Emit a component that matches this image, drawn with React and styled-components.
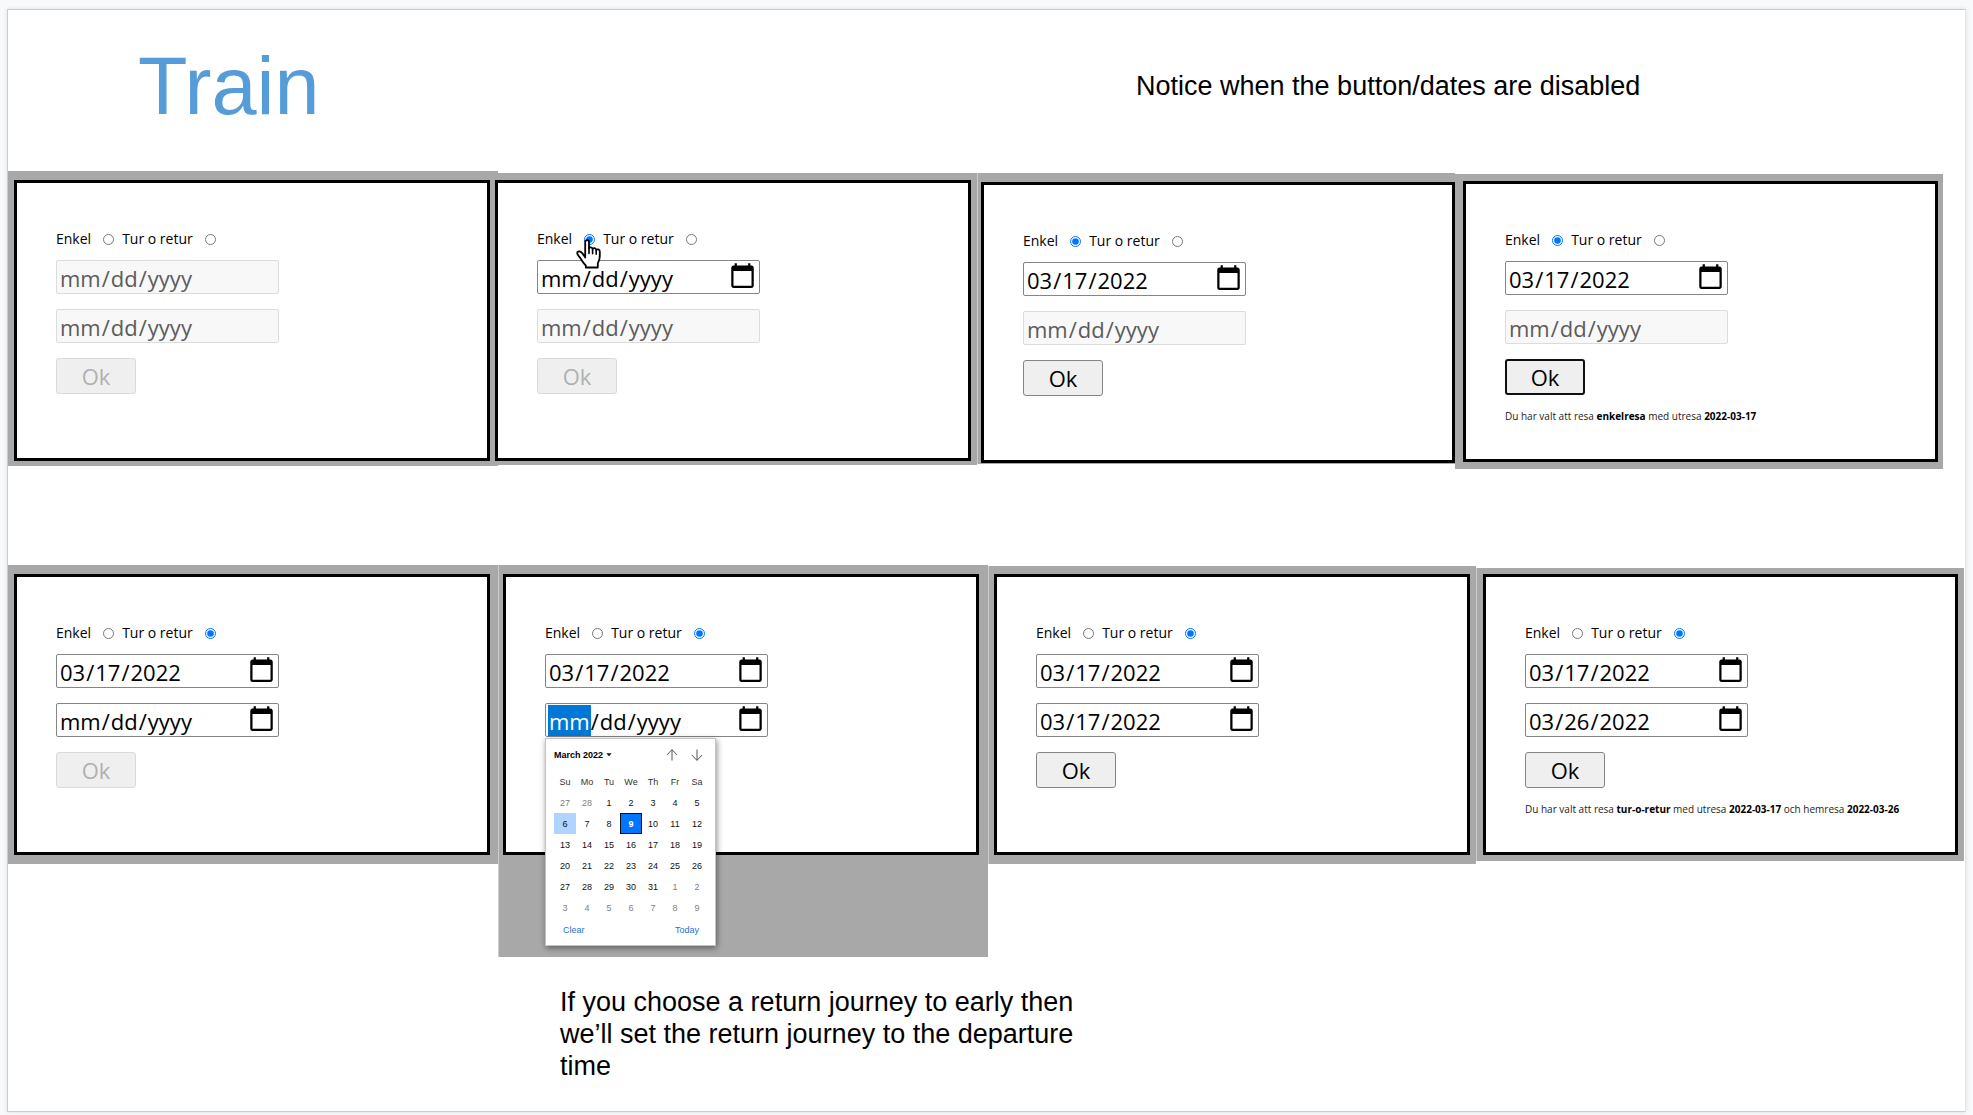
import React, { useId } from "react";
import styled, { createGlobalStyle, css } from "styled-components";

const GlobalStyle = createGlobalStyle`
  *, *::before, *::after { box-sizing: border-box; }
  body {
    margin: 0;
    background: #f8f9fb;
    color: #000;
    font-family: "Liberation Sans", Arial, sans-serif;
  }
`;

const uiFont = `"Open Sans", "Noto Sans", sans-serif`;

const Page = styled.div`
  min-height: 100vh;
  padding: 9px 7px 3px;
  display: flex;
`;

const Slide = styled.main`
  flex: 1;
  min-width: 0;
  background: #fff;
  border: 1px solid #c9ccd0;
  border-right-color: #e4e6e9;
  box-shadow: 0 0 4px rgba(60, 64, 67, 0.15);
`;

const SlideHeader = styled.header`
  display: grid;
  grid-template-columns: 1128fr 829fr;
  align-items: center;
  height: 161px;
  padding-bottom: 10px;
`;

const Title = styled.h1`
  margin: 0;
  padding-left: 130px;
  color: #569cd8;
  font-size: 81px;
  font-weight: 400;
  line-height: 96px;
`;

const Note = styled.p`
  margin: 0;
  font-size: 27px;
  line-height: 32px;
`;

const FootNote = styled(Note)`
  max-width: 540px;
  margin: 29px 0 0 552px;
`;

const ScreenRow = styled.section`
  display: grid;
  grid-template-columns: ${(p) => p.$columns};
  align-items: start;
  height: ${(p) => p.$height};
  padding-right: ${(p) => p.$end || "0"};
`;

const Screen = styled.article`
  margin-top: ${(p) => p.$drop || "0"};
  margin-left: ${(p) => p.$overlap || "0"};
  padding: ${(p) => p.$frame};
  background: #a8a8a8;
  ${(p) => p.$seam && css`border-left: 1px solid #ccc;`}
`;

const Form = styled.form`
  min-height: 281px;
  padding: 47px 39px 0;
  border: 3px solid #000;
  background: #fff;
  font-family: ${uiFont};
`;

const TripType = styled.fieldset`
  display: flex;
  align-items: center;
  margin: 0 0 12px;
  padding: 0;
  border: 0;
  height: 18px;
`;

const TripOption = styled.label`
  position: relative;
  display: flex;
  align-items: center;
  gap: 12px;
  margin-right: 8px;
  font-size: 14px;
  line-height: 18px;
  white-space: nowrap;
`;

const Radio = styled.input`
  width: 11px;
  height: 11px;
  margin: 0;
  accent-color: #0075ff;
`;

const Pointer = styled.svg`
  position: absolute;
  left: 39px;
  top: 9px;
  z-index: 1;
`;

const Field = styled.div`
  position: relative;
  width: 223px;
  margin-bottom: 15px;
`;

const DateInput = styled.input`
  display: block;
  width: 100%;
  height: 34px;
  margin: 0;
  padding: 1px 3px 0 2px;
  border: 1px solid #858585;
  border-radius: 2px;
  background: #fff;
  color: #000;
  font-family: ${uiFont};
  font-size: 22px;
  line-height: 30px;

  &::-webkit-calendar-picker-indicator {
    width: 27px;
    height: 27px;
    padding: 0;
    margin-bottom: 4px;
    background-size: 27px 27px;
  }

  &:disabled {
    border-color: #dcdcdc;
    background: #f8f8f8;
    color: #5c5c5c;
  }

  ${(p) => p.$editing && css`
    &::-webkit-datetime-edit-month-field {
      background: #0078d7;
      color: #fff;
    }
  `}
`;

const OkButton = styled.button`
  display: block;
  width: 80px;
  height: 36px;
  padding: 0;
  border: ${(p) => (p.$focused ? "2px solid #101010" : "1px solid #858585")};
  border-radius: 3px;
  background: #efefef;
  color: #000;
  font-family: ${uiFont};
  font-size: 22px;
  line-height: 32px;

  &:disabled {
    border-color: #dadada;
    color: #b0b0b0;
  }
`;

const Result = styled.output`
  display: block;
  margin-top: 15px;
  font-size: 10px;
  line-height: 12px;
  color: #222;
  white-space: nowrap;

  b { color: #000; }
`;

const Popup = styled.div`
  position: absolute;
  top: 100%;
  left: 0;
  z-index: 2;
  width: 171px;
  margin-top: 1px;
  padding: 6px 8px;
  background: #fff;
  border: 1px solid #c4c4c4;
  box-shadow: 1px 2px 6px rgba(0, 0, 0, 0.45);
  font-family: "Liberation Sans", Arial, sans-serif;
  font-size: 9px;
`;

const PopupBar = styled.div`
  display: flex;
  align-items: center;
  height: 20px;
`;

const PlainButton = styled.button`
  display: flex;
  align-items: center;
  padding: 0;
  border: 0;
  background: none;
  color: ${(p) => p.$color || "#000"};
  font: inherit;
`;

const MonthButton = styled(PlainButton)`
  gap: 3px;
  margin-right: auto;
  font-weight: 700;
`;

const ArrowButton = styled(PlainButton)`
  justify-content: flex-end;
  width: 25px;
  padding-right: 4px;
`;

const Days = styled.table`
  width: 154px;
  margin-top: 6px;
  border-collapse: collapse;
  table-layout: fixed;
  text-align: center;

  th {
    height: 21px;
    padding: 0;
    color: #333;
    font-weight: 400;
  }
`;

const Day = styled.td`
  height: 21px;
  padding: 0;
  color: ${(p) => (p.$outside ? "#808080" : "#111")};
  ${(p) => p.$hover && css`background: #b0d3ff;`}
  ${(p) => p.$today && css`
    background: #0075ff;
    color: #fff;
    font-weight: 700;
    box-shadow: inset 0 0 0 1px #101010;
  `}
`;

const PopupActions = styled.div`
  display: flex;
  justify-content: space-between;
  padding: 3px 8px 0 9px;
  line-height: 18px;
`;

const weekdays = ["Su", "Mo", "Tu", "We", "Th", "Fr", "Sa"];
const cells = Array.from({ length: 42 }, (_, i) => {
  const n = i - 1;
  if (n < 1) return { day: 28 + n, outside: true };
  if (n > 31) return { day: n - 31, outside: true };
  return { day: n, outside: false };
});
const weeks = Array.from({ length: 6 }, (_, w) => cells.slice(w * 7, w * 7 + 7));

function Arrow({ down }) {
  return (
    <svg width="12" height="12" viewBox="0 0 12 12" fill="none" stroke="#555" strokeWidth="1">
      {down ? <path d="M6 0.5V11.5M0.8 6L6 11.3L11.2 6" /> : <path d="M6 11.5V0.5M0.8 6L6 0.7L11.2 6" />}
    </svg>
  );
}

function Calendar() {
  return (
    <Popup>
      <PopupBar>
        <MonthButton type="button">
          March 2022
          <svg width="6" height="4" viewBox="0 0 6 4"><path d="M0.3 0.3H5.7L3 3.3Z" fill="#111" /></svg>
        </MonthButton>
        <ArrowButton type="button" aria-label="Previous month"><Arrow /></ArrowButton>
        <ArrowButton type="button" aria-label="Next month"><Arrow down /></ArrowButton>
      </PopupBar>
      <Days>
        <thead>
          <tr>{weekdays.map((d) => <th key={d} scope="col">{d}</th>)}</tr>
        </thead>
        <tbody>
          {weeks.map((week, w) => (
            <tr key={w}>
              {week.map(({ day, outside }) => (
                <Day
                  key={day}
                  $outside={outside}
                  $hover={!outside && day === 6}
                  $today={!outside && day === 9}
                >
                  {day}
                </Day>
              ))}
            </tr>
          ))}
        </tbody>
      </Days>
      <PopupActions>
        <PlainButton type="button" $color="#1a73d0">Clear</PlainButton>
        <PlainButton type="button" $color="#1a73d0">Today</PlainButton>
      </PopupActions>
    </Popup>
  );
}

function HandPointer() {
  return (
    <Pointer width="26" height="30" viewBox="0 0 26 30" aria-hidden="true">
      <path
        d="M9.2 18.5V3.2C9.2 0.4 13 0.4 13 3.2V9.6C13 7.8 16.4 7.8 16.6 10C17.2 8.5 20 8.8 20.2 11C21 9.8 23.8 10.2 23.8 12.6V17C23.8 21 22.4 22.6 21.8 24.5V28.5H9.8V26.5C7.6 24.5 5.6 20.6 3.6 18.2C1.4 15.6 0.6 13.8 1.8 12.8C3.2 11.6 5.4 13 6.6 14.6L9.2 18.2Z"
        fill="#fff"
        stroke="#000"
        strokeWidth="1.8"
        strokeLinejoin="round"
      />
      <path d="M13 9V14.5M16.6 10V14.8M20.2 11V15.2" stroke="#000" strokeWidth="1.6" strokeLinecap="round" />
    </Pointer>
  );
}

function TrainForm({ trip, out, back, outEnabled, backEnabled, okEnabled, okFocused, pointer, picking, children }) {
  const id = useId();
  return (
    <Form onSubmit={(e) => e.preventDefault()}>
      <TripType>
        <TripOption>
          Enkel
          <Radio type="radio" name={id} defaultChecked={trip === "single"} />
          {pointer && <HandPointer />}
        </TripOption>
        <TripOption>
          Tur o retur
          <Radio type="radio" name={id} defaultChecked={trip === "return"} />
        </TripOption>
      </TripType>
      <Field>
        <DateInput type="date" aria-label="Utresa" defaultValue={out} disabled={!outEnabled} />
      </Field>
      <Field>
        <DateInput type="date" aria-label="Hemresa" defaultValue={back} disabled={!backEnabled} $editing={picking} />
        {picking && <Calendar />}
      </Field>
      {!picking && <OkButton disabled={!okEnabled} $focused={okFocused}>Ok</OkButton>}
      {children && <Result>{children}</Result>}
    </Form>
  );
}

export default function App() {
  return (
    <>
      <GlobalStyle />
      <Page>
        <Slide>
          <SlideHeader>
            <Title>Train</Title>
            <Note>Notice when the button/dates are disabled</Note>
          </SlideHeader>

          <ScreenRow $columns="490fr 479fr 478fr 488fr" $height="394px" $end="22px">
            <Screen $frame="9px 8px 5px 6px">
              <TrainForm />
            </Screen>
            <Screen $drop="2px" $overlap="-8px" $frame="7px 6px 4px 5px">
              <TrainForm trip="single" outEnabled pointer />
            </Screen>
            <Screen $drop="2px" $seam $frame="9px 0 1px 3px">
              <TrainForm trip="single" out="2022-03-17" outEnabled okEnabled />
            </Screen>
            <Screen $drop="3px" $frame="7px 5px 7px 8px">
              <TrainForm trip="single" out="2022-03-17" outEnabled okEnabled okFocused>
                Du har valt att resa <b>enkelresa</b> med utresa <b>2022-03-17</b>
              </TrainForm>
            </Screen>
          </ScreenRow>

          <ScreenRow $columns="490fr 490fr 488fr 488fr" $height="392px" $end="1px">
            <Screen $frame="9px 8px 9px 6px">
              <TrainForm trip="return" out="2022-03-17" outEnabled backEnabled />
            </Screen>
            <Screen $seam $frame="9px 9px 102px 4px">
              <TrainForm trip="return" out="2022-03-17" outEnabled backEnabled okEnabled picking />
            </Screen>
            <Screen $seam $drop="1px" $frame="8px 6px 9px 5px">
              <TrainForm trip="return" out="2022-03-17" back="2022-03-17" outEnabled backEnabled okEnabled />
            </Screen>
            <Screen $seam $drop="3px" $frame="6px 6px 6px 6px">
              <TrainForm trip="return" out="2022-03-17" back="2022-03-26" outEnabled backEnabled okEnabled>
                Du har valt att resa <b>tur-o-retur</b> med utresa <b>2022-03-17</b> och hemresa <b>2022-03-26</b>
              </TrainForm>
            </Screen>
          </ScreenRow>

          <FootNote>
            If you choose a return journey to early then we’ll set the return journey to the departure time
          </FootNote>
        </Slide>
      </Page>
    </>
  );
}
